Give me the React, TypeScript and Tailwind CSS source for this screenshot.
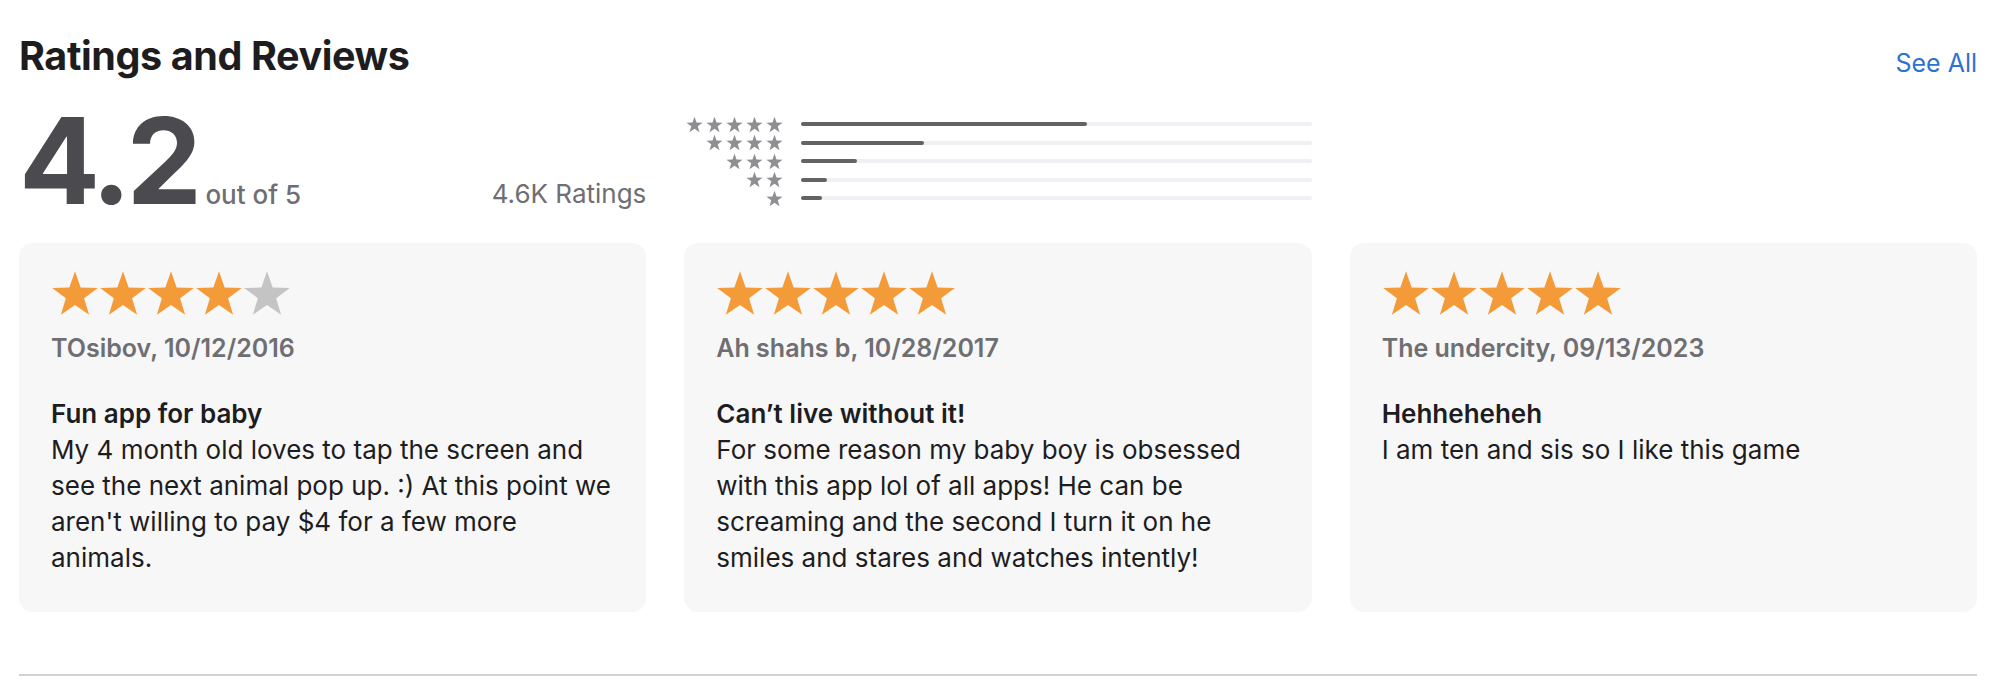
import React from "react";

function starPoints(cx: number, cy: number, R: number, r: number) {
  const pts: string[] = [];
  for (let i = 0; i < 10; i++) {
    const rad = i % 2 === 0 ? R : r;
    const a = (Math.PI / 5) * i - Math.PI / 2;
    pts.push(`${(cx + rad * Math.cos(a)).toFixed(2)},${(cy + rad * Math.sin(a)).toFixed(2)}`);
  }
  return pts.join(" ");
}

function Star({ size, color }: { size: number; color: string }) {
  const R = size / 2;
  const cy = size / 2 + 0.0955 * R;
  return (
    <svg width={size} height={size} viewBox={`0 0 ${size} ${size}`} className="block shrink-0">
      <polygon points={starPoints(size / 2, cy, R, R * 0.4)} fill={color} />
    </svg>
  );
}

const hist = [
  { stars: 5, pct: 56 },
  { stars: 4, pct: 24 },
  { stars: 3, pct: 10.9 },
  { stars: 2, pct: 5 },
  { stars: 1, pct: 4.1 },
];

const reviews = [
  {
    rating: 4,
    author: "TOsibov, 10/12/2016",
    title: "Fun app for baby",
    body: "My 4 month old loves to tap the screen and see the next animal pop up. :) At this point we aren't willing to pay $4 for a few more animals.",
  },
  {
    rating: 5,
    author: "Ah shahs b, 10/28/2017",
    title: "Can\u2019t live without it!",
    body: "For some reason my baby boy is obsessed with this app lol of all apps! He can be screaming and the second I turn it on he smiles and stares and watches intently!",
  },
  {
    rating: 5,
    author: "The undercity, 09/13/2023",
    title: "Hehheheheh",
    body: "I am ten and sis so I like this game",
  },
];

export default function App() {
  return (
    <div
      className="w-[1996px] h-[684px] bg-white px-[19px] pt-[35px] overflow-hidden"
      style={{ fontFamily: "Inter, 'Noto Sans', 'Liberation Sans', sans-serif" }}
    >
      <div className="flex items-baseline justify-between">
        <h2 className="text-[39.5px] leading-[42px] font-bold text-[#1d1d1f] tracking-[-0.01em]">
          Ratings and Reviews
        </h2>
        <a className="text-[25px] leading-[30px] text-[#2e72d1] translate-y-[2px]">See All</a>
      </div>

      <div className="grid grid-cols-3 gap-[38px] mt-[24px]">
        <div className="flex items-end justify-between">
          <div className="flex items-baseline">
            <span className="text-[120px] leading-[120px] font-bold text-[#4a4a4f] tracking-[-0.04em]">4.2</span>
            <span className="text-[26px] font-medium text-[#6e6e73] ml-[8px]">out of 5</span>
          </div>
          <span className="text-[26px] text-[#6e6e73] mb-[8px]">4.6K Ratings</span>
        </div>
        <div className="flex flex-col pt-[14px]">
          {hist.map((h) => (
            <div key={h.stars} className="flex items-center h-[18.5px]">
              <div className="w-[100px] flex justify-end">
                {Array.from({ length: h.stars }).map((_, i) => (
                  <div key={i} className="w-[20px] flex justify-center">
                    <Star size={17} color="#8e8e93" />
                  </div>
                ))}
              </div>
              <div className="flex-1 ml-[17px] h-[4px] rounded-full bg-[#efeff4]">
                <div className="h-full rounded-full bg-[#636366]" style={{ width: `${h.pct}%` }} />
              </div>
            </div>
          ))}
        </div>
        <div />
      </div>

      <div className="grid grid-cols-3 gap-[38px] mt-[22px]">
        {reviews.map((r) => (
          <div key={r.author} className="bg-[#f7f7f7] rounded-[14px] pl-[32px] pr-[32px] pt-[26px] pb-[36px]">
            <div className="flex">
              {Array.from({ length: 5 }).map((_, i) => (
                <Star key={i} size={48} color={i < r.rating ? "#f29b38" : "#c4c4c4"} />
              ))}
            </div>
            <div className="mt-[13px] text-[25px] leading-[36px] font-semibold text-[#6e6e73]">{r.author}</div>
            <div className="mt-[30px] text-[26px] leading-[36px] font-semibold text-[#1d1d1f]">{r.title}</div>
            <p className="text-[26px] leading-[36px] text-[#1d1d1f]">{r.body}</p>
          </div>
        ))}
      </div>

      <div className="mt-[62px] border-t-2 border-[#d2d2d7]" />
    </div>
  );
}
